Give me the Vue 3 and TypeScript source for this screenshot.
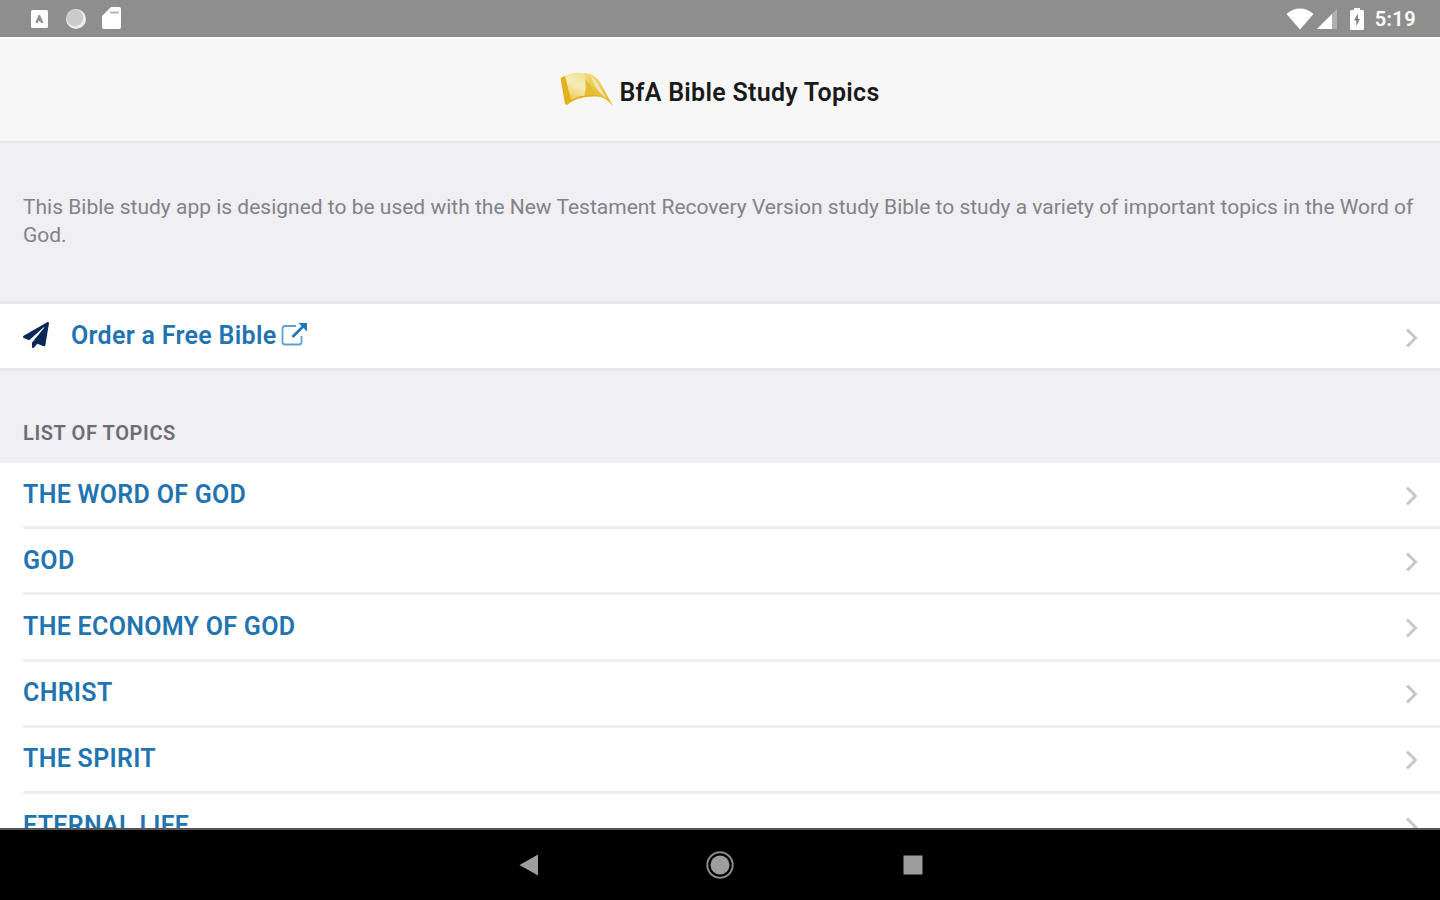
<script setup lang="ts">
import { ref } from "vue";

interface Topic {
  id: number;
  title: string;
}

const time = ref("5:19");

const topics: Topic[] = [
  { id: 1, title: "THE WORD OF GOD" },
  { id: 2, title: "GOD" },
  { id: 3, title: "THE ECONOMY OF GOD" },
  { id: 4, title: "CHRIST" },
  { id: 5, title: "THE SPIRIT" },
  { id: 6, title: "ETERNAL LIFE" }
];
</script>

<template>
  <div class="screen">
    <header class="status-bar">
      <div class="status-left">
        <svg width="18" height="20" viewBox="0 0 18 20">
          <rect x="0" y="1" width="17" height="18" rx="1.5" fill="#fff" />
          <path d="M4.500 14 7.500 6H9l3.500 8h-2.500l-.7-1.700H7.200L6.700 14z" fill="#8e8e8e" />
        </svg>
        <svg width="22" height="22" viewBox="0 0 22 22">
          <circle cx="11" cy="11" r="10" fill="#ececec" />
          <circle cx="9.700" cy="9.700" r="8.500" fill="#cbcbcb" />
        </svg>
        <svg class="sd-card" width="19" height="24" viewBox="0 0 19 24">
          <path d="M9 1h8a2 2 0 0 1 2 2v18a2 2 0 0 1-2 2H2a2 2 0 0 1-2-2V10z" fill="#fff" />
          <path d="M8 6.500h9" stroke="#b4b4b4" stroke-width="2" />
        </svg>
      </div>
      <div class="status-right">
        <svg class="wifi" width="28" height="22" viewBox="0 0 28 22">
          <path d="M14 21.500.5 6C4 2.500 9 .5 14 .5S24 2.500 27.500 6z" fill="#fff" />
        </svg>
        <svg class="signal" width="20" height="20" viewBox="0 0 20 20">
          <path d="M20 0v20H0z" fill="#b0b0b0" />
          <path d="M15 5v15H0z" fill="#fff" />
        </svg>
        <svg class="battery" width="14" height="22" viewBox="0 0 14 22">
          <path d="M4 0h6v2h2.500A1.500 1.500 0 0 1 14 3.500v17a1.500 1.500 0 0 1-1.500 1.500h-11A1.500 1.500 0 0 1 0 20.500v-17A1.500 1.500 0 0 1 1.500 2H4z" fill="#fff" />
          <path d="M8 5.500 4 12.500h2.300V18L10 11H8z" fill="#808080" />
        </svg>
        <span class="time">{{ time }}</span>
      </div>
    </header>

    <div class="title-bar">
      <svg class="logo" width="54" height="36" viewBox="0 0 54 36">
        <defs>
          <linearGradient id="page" x1="0.700" y1="0" x2="0.200" y2="1">
            <stop offset="0" stop-color="#efe08c" />
            <stop offset="0.500" stop-color="#f6ecbc" />
            <stop offset="1" stop-color="#ecca4a" />
          </linearGradient>
          <linearGradient id="fold" x1="0" y1="0" x2="0" y2="1">
            <stop offset="0" stop-color="#efdc80" />
            <stop offset="1" stop-color="#e2b01a" />
          </linearGradient>
        </defs>
        <path d="M.5 7 6 4.500l6 22L38 22l3 4c-10-1-18 0-25 2.500-4 1.500-6 3-9 5.500l-2-1z" fill="#e2b11a" />
        <path d="M5 5C11 1.500 19 .8 27 3l10 21c-9-1-18 0-26 5z" fill="url(#page)" />
        <path d="M24 2c8 0 13 4 17 11l12 22c-5-5-8-8-14-9.500C33 20 28 12 24 2z" fill="url(#fold)" />
        <path d="M25 7c1 8 1 13-1 17l14 .5z" fill="#e6bd33" />
        <path d="M31 6c4 2 6 5 8 9l7 12c-7-5-12-13-15-21z" fill="#f5e8ad" />
      </svg>
      <h1 class="title">BfA Bible Study Topics</h1>
    </div>

    <main class="content">
      <p class="intro">
        This Bible study app is designed to be used with the New Testament Recovery Version study Bible to study a variety of important topics in the Word of God.
      </p>

      <a class="order">
        <svg class="plane" width="26" height="26" viewBox="0 0 512 512" preserveAspectRatio="none">
          <path
            d="M476 3.200 12.500 270.600c-18.100 10.400-15.800 35.600 2.200 43.200L121 358.400l287.300-253.200c5.500-4.900 13.300 2.600 8.600 8.300L176 407v80.500c0 23.600 28.500 32.900 42.500 15.800L282 426l124.600 52.200c14.200 6 30.400-2.900 33-18.200l72-432C515 7.800 493.300-6.800 476 3.200z"
            fill="#0c2757"
          />
        </svg>
        <span class="order-label">Order a Free Bible</span>
        <svg class="external" width="27" height="25" viewBox="0 0 27 25">
          <path d="M15 4H4a2.500 2.500 0 0 0-2.500 2.500V20A2.500 2.500 0 0 0 4 22.500h14a2.500 2.500 0 0 0 2.500-2.500v-6" fill="none" stroke="#5f9fcb" stroke-width="1.800" />
          <path d="M11.500 15 22 4.500" stroke="#1f78b5" stroke-width="2.600" />
          <path d="M17.500 1H26v8.500z" fill="#1f78b5" />
        </svg>
        <svg class="chevron" width="14" height="20" viewBox="0 0 14 20">
          <path d="m2 1.500 8.500 8.500L2 18.500" />
        </svg>
      </a>

      <h2 class="section-title">LIST OF TOPICS</h2>

      <ul class="topics">
        <li v-for="topic in topics" :key="topic.id" class="topic">
          <span>{{ topic.title }}</span>
          <svg class="chevron" width="14" height="20" viewBox="0 0 14 20">
            <path d="m2 1.500 8.500 8.500L2 18.500" />
          </svg>
        </li>
      </ul>
    </main>

    <nav class="nav-bar">
      <svg class="back" width="20" height="22" viewBox="0 0 20 22">
        <path d="M19 .5v21L.5 11z" fill="#9e9e9e" />
      </svg>
      <svg width="30" height="30" viewBox="0 0 30 30">
        <circle cx="15" cy="15" r="9.500" fill="#9e9e9e" />
        <circle cx="15" cy="15" r="12.700" fill="none" stroke="#8a8a8a" stroke-width="2" />
      </svg>
      <svg width="20" height="20" viewBox="0 0 20 20">
        <rect x="0.500" y="0.500" width="19" height="19" fill="#9e9e9e" />
      </svg>
    </nav>
  </div>
</template>

<style>
body {
  margin: 0;
  overflow: hidden;
}
</style>

<style scoped>
.screen {
  display: flex;
  flex-direction: column;
  width: 1440px;
  height: 900px;
  overflow: hidden;
  background: #efeff4;
  font-family: Roboto, sans-serif;
}

svg {
  flex: none;
}

.status-bar {
  display: flex;
  flex: none;
  justify-content: space-between;
  box-sizing: border-box;
  height: 37px;
  padding: 0 24px 0 31px;
  background: #8e8e8e;
}

.status-left,
.status-right {
  display: flex;
  align-items: center;
}

.status-left {
  gap: 16px;
}

.sd-card {
  margin-left: -1px;
  margin-bottom: 1px;
}

.wifi {
  margin-right: 3px;
}

.signal {
  margin-right: 13px;
}

.battery {
  margin-right: 11px;
}

.time {
  padding-top: 2px;
  color: #fff;
  font-size: 20px;
  font-weight: 600;
  letter-spacing: 0.4px;
  line-height: 35px;
}

.title-bar {
  display: flex;
  flex: none;
  justify-content: center;
  box-sizing: border-box;
  height: 106px;
  padding-top: 32px;
  border-top: 2px solid #fff;
  border-bottom: 2px solid #e5e5ea;
  background: #f7f7f7;
}

.title {
  margin: 7px 0 0 5px;
  color: #1a1a1a;
  font-size: 25px;
  font-weight: 600;
  line-height: 30px;
  letter-spacing: 0.28px;
}

.content {
  flex: 1;
  min-height: 0;
  overflow: hidden;
}

.intro {
  box-sizing: border-box;
  height: 158px;
  margin: 0;
  padding: 50px 23px 0;
  color: #838387;
  font-size: 21px;
  line-height: 28px;
}

.order {
  display: flex;
  align-items: center;
  box-sizing: border-box;
  height: 70px;
  padding: 0 21px 0 23px;
  border-top: 3px solid #e9e9ed;
  border-bottom: 3px solid #e9e9ed;
  background: #fff;
}

.plane {
  margin-bottom: 3px;
}

.order-label {
  margin: 0 5px 0 22px;
  color: #1f74b1;
  font-size: 25px;
  font-weight: 600;
  line-height: 30px;
  letter-spacing: 0.3px;
}

.external {
  margin-top: -4px;
}

.chevron {
  margin-left: auto;
  margin-top: 3px;
}

.chevron path {
  fill: none;
  stroke: #c7c7cc;
  stroke-width: 3;
}

.section-title {
  box-sizing: border-box;
  height: 92px;
  margin: 0;
  padding: 50px 23px 0;
  color: #6d6d72;
  font-size: 20px;
  font-weight: 600;
  line-height: 24px;
  letter-spacing: 0.6px;
}

.topics {
  margin: 0;
  padding: 0 0 0 23px;
  background: #fff;
  list-style: none;
}

.topic {
  display: flex;
  align-items: center;
  box-sizing: border-box;
  height: 66.2px;
  padding: 0 21px 1px 0;
  border-bottom: 3px solid #efefef;
  color: #1f74b1;
  font-size: 25px;
  font-weight: 600;
  letter-spacing: 0.3px;
}

.nav-bar {
  display: flex;
  flex: none;
  align-items: center;
  justify-content: center;
  gap: 168px;
  box-sizing: border-box;
  height: 72px;
  border-top: 2px solid #555;
  background: #000;
}

.back {
  margin: 0 -2px 0 2px;
}
</style>
